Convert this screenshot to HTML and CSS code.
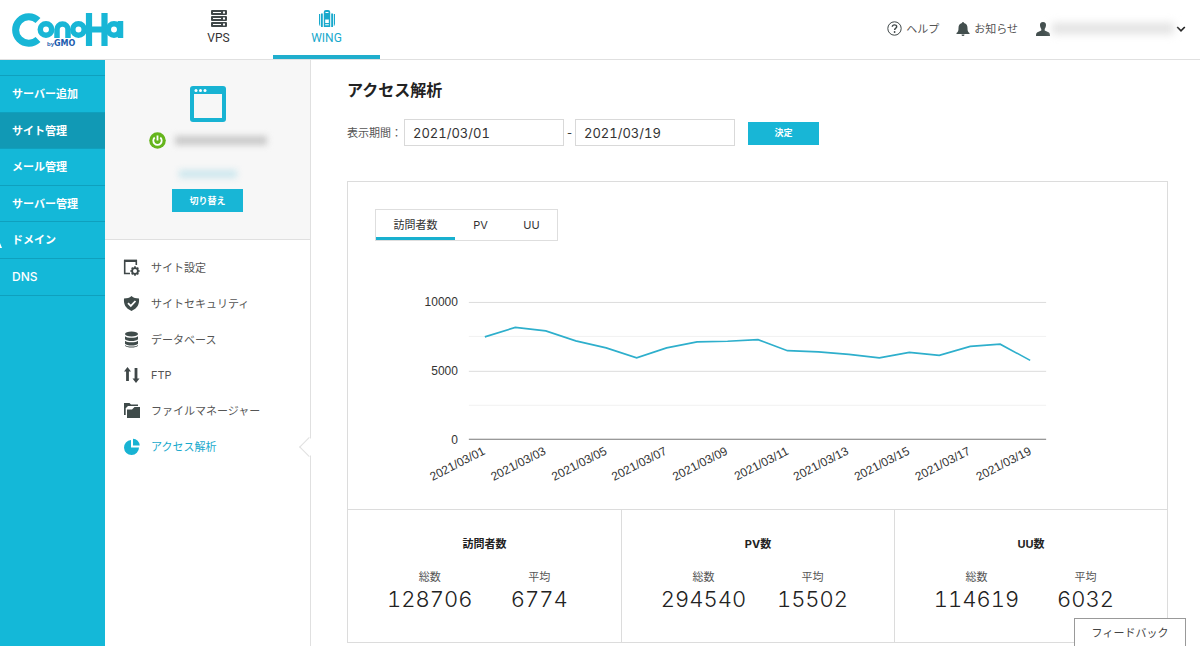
FILE: index.html
```html
<!DOCTYPE html>
<html lang="ja">
<head>
<meta charset="utf-8">
<title>アクセス解析 - ConoHa WING</title>
<link rel="stylesheet" href="styles.css">
</head>
<body>
<header class="header">
  <a class="logo" href="#" aria-label="ConoHa by GMO">
    <svg width="114" height="36" viewBox="0 0 114 36" aria-hidden="true">
      <g fill="none" stroke="#18b6d6" stroke-width="5.500">
        <path d="M27 8.500A13.200 13.200 0 1 0 27 27.500" stroke-width="7"/>
        <circle cx="35" cy="17.500" r="5.700"/>
        <path d="M46 26V17.500a5.500 5.500 0 0 1 11 0V26"/>
        <circle cx="67.500" cy="17.500" r="5.700"/>
        <path d="M78 1V34M93.500 1V34M78 17.500H93.500" stroke-width="6.200"/>
        <circle cx="103" cy="17.500" r="5.700"/>
        <path d="M109.500 9V26"/>
      </g>
      <text class="logo-by" x="36" y="34">by</text>
      <text class="logo-gmo" x="43" y="34">GMO</text>
    </svg>
  </a>
  <nav class="tabs" aria-label="サービス">
    <a class="tab" href="#">
      <svg width="16" height="17" viewBox="0 0 16 17"><g fill="#3f4748"><rect y="0" width="16" height="5" rx="1"/><rect y="6" width="16" height="5" rx="1"/><rect y="12" width="16" height="5" rx="1"/></g><path d="M2 2.500h8M2 8.500h8M2 14.500h8" stroke="#fff"/><path d="M12 2.500h2M12 8.500h2M12 14.500h2" stroke="#fff" stroke-width="2"/></svg>
      <span>VPS</span>
    </a>
    <a class="tab tab-active" href="#">
      <svg width="16" height="17" viewBox="0 0 16 17" fill="#18a9cc"><path d="M4.800 2a2 2 0 0 1 2-2h2.400a2 2 0 0 1 2 2v15H4.800z"/><path d="M2 3.500h1.800V17H2zM12.200 3.500H14V17h-1.800z"/><path d="M0 4h1.200v12H.8L0 14zM14.800 4H16v10l-.8 2h-.4z"/><path d="M6.200 9.500h3.600v3.500H6.200zM6.200 14.300h3.600v1H6.200zM6.500 2h3v1h-3z" fill="#fff"/></svg>
      <span>WING</span>
    </a>
  </nav>
  <div class="tools">
    <a class="tool help" href="#"><svg width="15" height="15" viewBox="0 0 15 15"><circle cx="7.500" cy="7.500" r="6.700" fill="none" stroke="#3f4748"/><path d="M5.300 5.800C5.400 3.200 9.700 3.300 9.700 5.700 9.700 7.100 7.600 7.200 7.600 9" fill="none" stroke="#3f4748" stroke-width="1.400"/><circle cx="7.600" cy="11" r=".9" fill="#3f4748"/></svg>ヘルプ</a>
    <a class="tool news" href="#"><svg width="14" height="14" viewBox="0 0 14 14" fill="#434f4e"><path d="M7 0a1 1 0 0 1 1 1c2.500.5 3.500 2.500 3.500 5 0 3 .5 4 2 5v1H.5v-1c1.500-1 2-2 2-5C2.500 3.500 3.500 1.500 6 1a1 1 0 0 1 1-1zM5.500 12.500h3a1.500 1.500 0 0 1-3 0z"/></svg>お知らせ</a>
    <button class="account" type="button" aria-label="アカウント">
      <svg width="14" height="14" viewBox="0 0 14 14" fill="#434f4e"><path d="M7 0c2.200 0 3.200 1.500 3 3.500C9.800 5.500 9 6.500 8.700 7v1.500L12 10c1.500.6 2 1.500 2 4H0c0-2.500.5-3.400 2-4l3.300-1.500V7C5 6.500 4.200 5.500 4 3.500 3.800 1.500 4.800 0 7 0z"/></svg>
      <span class="account-name"></span>
      <svg width="10" height="8" viewBox="0 0 10 8"><path d="M1.200 2l3.800 3.800L8.800 2" fill="none" stroke="#222" stroke-width="1.700"/></svg>
    </button>
  </div>
</header>

<div class="body">
  <nav class="side" aria-label="メイン">
    <a href="#">サーバー追加</a>
    <a class="side-active" href="#">サイト管理</a>
    <a href="#">メール管理</a>
    <a href="#">サーバー管理</a>
    <a href="#">ドメイン</a>
    <a href="#">DNS</a>
  </nav>

  <aside class="sub">
    <section class="site">
      <svg width="36" height="36" viewBox="0 0 36 36"><rect width="36" height="36" rx="3" fill="#18b3d3"/><rect x="4" y="8" width="28" height="24" fill="#f7f7f7"/><g fill="#fff"><circle cx="6" cy="4.500" r="1.500"/><circle cx="10.500" cy="4.500" r="1.500"/><circle cx="15" cy="4.500" r="1.500"/></g></svg>
      <div class="site-status">
        <svg width="17" height="17" viewBox="0 0 17 17"><circle cx="8.500" cy="8.500" r="8.300" fill="#65b51c"/><path d="M5.700 5.500a4.200 4.200 0 1 0 5.600 0M8.500 3.500v5" fill="none" stroke="#fff" stroke-width="1.800"/></svg>
        <span class="site-name"></span>
      </div>
      <span class="site-plan"></span>
      <button class="button" type="button">切り替え</button>
    </section>
    <nav class="menu" aria-label="サイト管理">
      <a href="#"><svg width="18" height="18" viewBox="0 0 18 18"><path d="M7 14.500H1.700V1.800h11.600V6" fill="none" stroke="#3f4748" stroke-width="1.600"/><path d="M1 1.800h13" stroke="#3f4748" stroke-width="2.400"/><circle cx="12" cy="12" r="2.900" fill="#fff" stroke="#3f4748" stroke-width="1.800"/><path d="M12 7.300v2M12 14.700v2M7.300 12h2M14.700 12h2M8.700 8.700l1.400 1.400M13.900 13.900l1.400 1.400M8.700 15.300l1.400-1.400M13.900 10.100l1.400-1.400" stroke="#3f4748" stroke-width="1.700"/></svg>サイト設定</a>
      <a href="#"><svg width="18" height="18" viewBox="0 0 18 18"><path d="M8.500 1C10.500 2.800 13 3.400 16 3.500c.5 6-1.500 9.500-7.500 12.500C2.500 13 .5 9.500 1 3.500 4 3.400 6.500 2.800 8.500 1z" fill="#3f4b4a"/><path d="M5 8.200l2.800 2.700L12.500 6" fill="none" stroke="#fff" stroke-width="1.800"/></svg>サイトセキュリティ</a>
      <a href="#"><svg width="18" height="18" viewBox="0 0 18 18" fill="#3f4b4a"><ellipse cx="8.500" cy="3" rx="6.500" ry="2.500"/><path d="M2 5.200c2 2 11 2 13 0v3c-1.500 2.400-11.500 2.400-13 0zM2 9.700c2 2 11 2 13 0v3c-1.500 2.400-11.500 2.400-13 0zM2 14c2 2 11 2 13 0v.7c-1.500 2.400-11.500 2.400-13 0z"/></svg>データベース</a>
      <a href="#"><svg width="18" height="18" viewBox="0 0 18 18" fill="#3f4748"><path d="M4.500 1L8 5.500H5.900V15H3.100V5.500H1zM13 17L9.500 12.500h2.100V2h2.800v10.500h2.100z"/></svg>FTP</a>
      <a href="#"><svg width="18" height="18" viewBox="0 0 18 18" fill="#3f4b4a"><path d="M1 1h5.500l1.500 1.500h7V4H5L2.700 6.300V13H1z"/><path d="M4 7.500h5L11.500 5H17v11H4z"/></svg>ファイルマネージャー</a>
      <a class="menu-active" href="#" aria-current="page"><svg width="18" height="18" viewBox="0 0 18 18" fill="#18b3d3"><path d="M8 2v7.500h8A7.500 7.500 0 1 1 8 2z"/><path d="M10 .8A7 7 0 0 1 16.700 7.500H10z"/></svg>アクセス解析</a>
    </nav>
  </aside>

  <main class="main">
    <h1>アクセス解析</h1>
    <form class="period">
      <label for="from">表示期間：</label>
      <input id="from" type="text" value="2021/03/01">
      <span class="dash">-</span>
      <input id="to" type="text" value="2021/03/19" aria-label="終了日">
      <button class="button" type="button">決定</button>
    </form>
    <section class="card">
      <div class="switch">
        <button class="switch-active" type="button">訪問者数</button>
        <button type="button">PV</button>
        <button type="button">UU</button>
      </div>
      <svg class="chart" viewBox="0 0 820 268" role="img" aria-label="訪問者数の推移">
        <g stroke="#f1f1f1"><path d="M121 95.500H699M121 164.500H699"/></g>
        <g stroke="#dcdcdc"><path d="M121 61.500H699M121 130.500H699"/></g>
        <path d="M121 198.500H699" stroke="#777"/>
        <polyline fill="none" stroke="#2eafcc" stroke-width="1.600" points="137,96 167.500,86.500 198,90 228,100 258.500,107 289,117 319,107 349.500,101 380,100.300 410.500,98.800 440,109.800 471,111 501.500,113.500 532,117 562,111.500 592,114.500 623,105.500 653,103.300 683,119.500"/>
        <g class="axis">
          <text x="110" y="65">10000</text><text x="110" y="134">5000</text><text x="110" y="203">0</text>
        </g>
        <g class="axis">
          <text transform="translate(138 213) rotate(-27)">2021/03/01</text>
          <text transform="translate(199 213) rotate(-27)">2021/03/03</text>
          <text transform="translate(260 213) rotate(-27)">2021/03/05</text>
          <text transform="translate(320 213) rotate(-27)">2021/03/07</text>
          <text transform="translate(381 213) rotate(-27)">2021/03/09</text>
          <text transform="translate(442 213) rotate(-27)">2021/03/11</text>
          <text transform="translate(502 213) rotate(-27)">2021/03/13</text>
          <text transform="translate(563 213) rotate(-27)">2021/03/15</text>
          <text transform="translate(624 213) rotate(-27)">2021/03/17</text>
          <text transform="translate(685 213) rotate(-27)">2021/03/19</text>
        </g>
      </svg>
      <div class="stats">
        <section class="stat">
          <h2>訪問者数</h2>
          <dl><div><dt>総数</dt><dd>128706</dd></div><div><dt>平均</dt><dd>6774</dd></div></dl>
        </section>
        <section class="stat">
          <h2>PV数</h2>
          <dl><div><dt>総数</dt><dd>294540</dd></div><div><dt>平均</dt><dd>15502</dd></div></dl>
        </section>
        <section class="stat">
          <h2>UU数</h2>
          <dl><div><dt>総数</dt><dd>114619</dd></div><div><dt>平均</dt><dd>6032</dd></div></dl>
        </section>
      </div>
    </section>
  </main>
</div>
<button class="feedback" type="button">フィードバック</button>
</body>
</html>
```
FILE: styles.css
```css
* { box-sizing: border-box; }
body {
  margin: 0;
  min-height: 100vh;
  display: flex;
  flex-direction: column;
  background: #fff;
  color: #333;
  font: 11px/16px Inter, "Noto Sans CJK JP", sans-serif;
}
a { color: inherit; text-decoration: none; }
button, input { font: inherit; color: inherit; margin: 0; border-radius: 0; }
button { border: 0; background: none; padding: 0; }
h1, h2, dl, dd { margin: 0; }
svg { display: block; flex: none; }

.header {
  display: flex;
  height: 60px;
  border-bottom: 1px solid #e0e0e0;
}
.logo { width: 165px; padding: 12px 0 0 11px; }
.logo-by { font: bold 6px "Liberation Sans", sans-serif; fill: #1c5cae; }
.logo-gmo { font: bold 8px "DejaVu Sans", sans-serif; fill: #1c5cae; }
.tabs { display: flex; }
.tab {
  width: 107px;
  display: flex;
  flex-direction: column;
  align-items: center;
  gap: 3px;
  padding-top: 10px;
  border-bottom: 4px solid transparent;
  font: 12px/16px Roboto, sans-serif;
}
.tab + .tab { margin-left: 1px; }
.tab-active { color: #18a9cc; border-color: #20aecd; }
.tools {
  margin-left: auto;
  display: flex;
  align-items: center;
  padding: 0 14px 2px 0;
  color: #555;
}
.tool, .account { display: flex; align-items: center; gap: 4px; }
.news { margin: 0 18px 0 17px; }
.account { gap: 2px; }
.account-name {
  width: 122px;
  height: 11px;
  background: #e2e2e2;
  filter: blur(4px);
}

.body { flex: 1; display: flex; align-items: stretch; }
.side {
  position: relative;
  flex: none;
  width: 105px;
  background: #14b8d8;
  color: #fff;
  padding-top: 15px;
  font-weight: 700;
}
.side::after {
  content: "";
  position: absolute;
  left: 0;
  top: 183px;
  border-left: 2px solid #fff;
  border-top: 5px solid transparent;
}
.side a {
  display: flex;
  align-items: center;
  height: 37px;
  padding-left: 12px;
  border-top: 1px solid #0fa0be;
}
.side a:nth-child(even) { height: 36px; }
.side a:last-of-type { height: 38px; border-bottom: 1px solid #0fa0be; font-weight: 500; font-size: 12px; }
.side .side-active { background: #1199b5; height: 37px; }

.sub { flex: none; width: 206px; border-right: 1px solid #e0e0e0; }
.site {
  display: flex;
  flex-direction: column;
  align-items: center;
  height: 180px;
  padding-top: 26px;
  background: #f7f7f7;
  border-bottom: 1px solid #e0e0e0;
}
.site-status { display: flex; align-items: center; gap: 9px; margin-top: 10px; }
.site-name { width: 92px; height: 9px; background: #c9c9c9; filter: blur(3px); }
.site-plan { width: 58px; height: 8px; margin: 21px 0 11px; background: #cde7ee; filter: blur(3px); }
.button {
  width: 71px;
  height: 23px;
  background: #18b6d6;
  color: #fff;
  font-size: 9px;
  font-weight: 700;
}
.menu { display: grid; grid-template-rows: repeat(6, 1fr); height: 225px; padding-top: 10px; }
.menu a { display: flex; align-items: center; gap: 10px; padding-left: 18px; color: #555; }
.menu .menu-active { position: relative; color: #18a9cc; }
.menu-active::after {
  content: "";
  position: absolute;
  right: -6px;
  top: 11px;
  width: 13px;
  height: 13px;
  background: #fff;
  border: solid #e0e0e0;
  border-width: 0 0 1px 1px;
  transform: rotate(45deg);
}

.main { flex: 1; min-width: 0; padding: 18px 32px 4px 36px; }
h1 { font-size: 16px; line-height: 24px; font-weight: 700; color: #222; }
.period { display: flex; align-items: center; margin-top: 17px; }
.period label { width: 57px; color: #555; white-space: nowrap; }
.period input {
  width: 160px;
  height: 27px;
  padding: 0 8px;
  border: 1px solid #d9d9d9;
  background: #fff;
  font-size: 13px;
  font-variant-numeric: tabular-nums;
  color: #333;
}
.dash { width: 11px; text-align: center; }
.period .button { margin-left: 13px; margin-top: 1px; }
.card { margin-top: 35px; padding-top: 27px; border: 1px solid #dcdcdc; }
.switch {
  display: flex;
  width: max-content;
  margin-left: 27px;
  border: 1px solid #dedede;
  height: 32px;
}
.switch button { width: 51px; border-bottom: 3px solid transparent; padding-top: 2px; }
.switch .switch-active { width: 79px; border-color: #18b0cf; }
.chart { width: 100%; height: auto; }
.axis { font: 12px "Liberation Sans", sans-serif; fill: #333; text-anchor: end; }
.stats { display: grid; grid-template-columns: repeat(3, 1fr); border-top: 1px solid #dcdcdc; }
.stat { padding: 26px 27px 28px; text-align: center; }
.stat + .stat { border-left: 1px solid #dcdcdc; }
.stat h2 { font-size: 11px; line-height: 16px; font-weight: 700; color: #222; }
.stat dl { display: grid; grid-template-columns: 1fr 1fr; margin-top: 17px; }
.stat dt { color: #555; }
.stat dd {
  font-size: 22px;
  line-height: 29px;
  font-weight: 300;
  font-variant-numeric: tabular-nums;
  color: #222;
}
.feedback {
  position: fixed;
  right: 14px;
  bottom: 0;
  width: 112px;
  height: 28px;
  background: #fff;
  border: 1px solid #999;
  border-bottom: 0;
  color: #444;
}
```
